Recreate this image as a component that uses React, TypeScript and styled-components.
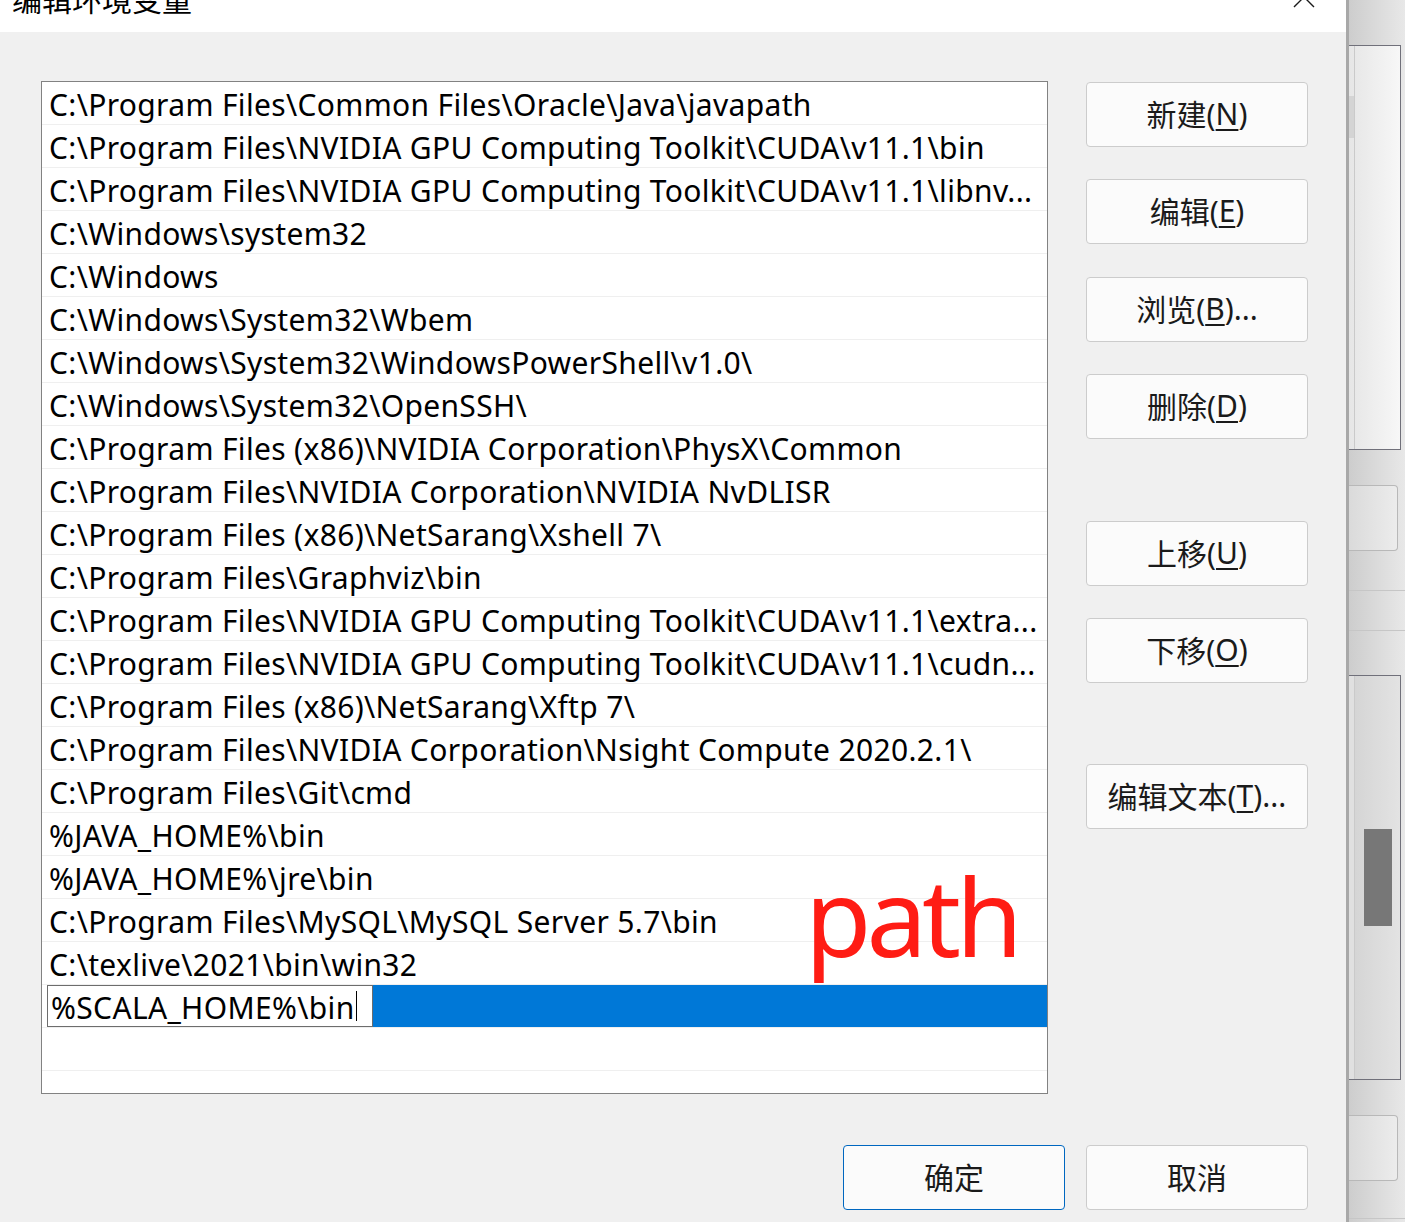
import React from "react";
import styled, { createGlobalStyle } from "styled-components";

const GlobalStyle = createGlobalStyle`
  html, body {
    margin: 0;
    padding: 0;
    background: #f0f0f0;
    overflow: hidden;
  }
`;

const Screen = styled.div`
  width: 1405px;
  height: 1222px;
  display: flex;
  overflow: hidden;
`;

const Dialog = styled.div`
  position: relative;
  width: 1346px;
  flex: none;
  display: flex;
  flex-direction: column;
  background: #f0f0f0;
`;

const TitleBar = styled.div`
  height: 32px;
  flex: none;
  background: #ffffff;
  display: flex;
  justify-content: space-between;
  align-items: flex-start;
  padding: 0 31px 0 12px;
  overflow: hidden;
`;

const Title = styled.div`
  margin-top: -22px;
  font-family: "Noto Sans CJK SC", sans-serif;
  font-size: 30px;
  line-height: 40px;
  color: #000;
`;

const CloseIcon = styled.svg`
  margin-top: -14px;
  width: 22px;
  height: 22px;
  flex: none;
`;

const Body = styled.div`
  flex: 1;
  display: flex;
  flex-direction: column;
  padding: 49px 38px 0 41px;
`;

const Main = styled.div`
  display: flex;
  gap: 38px;
`;

const ListBox = styled.div`
  width: 1007px;
  height: 1013px;
  box-sizing: border-box;
  border: 1px solid #828282;
  background: #ffffff;
  overflow: hidden;
`;

const Row = styled.div`
  height: 42px;
  border-bottom: 1px solid #efefef;
  padding-left: 7px;
  font-family: "Noto Sans", sans-serif;
  font-size: 30px;
  letter-spacing: 0.34px;
  line-height: 45px;
  color: #000;
  white-space: nowrap;
  overflow: hidden;
`;

const EditRow = styled.div`
  height: 42px;
  border-bottom: 1px solid #efefef;
  display: flex;
  padding-left: 5px;
`;

const EditBox = styled.div`
  width: 326px;
  box-sizing: border-box;
  border: 1px solid #6d6d6d;
  background: #fff;
  padding: 3px 0 0 3px;
  display: flex;
  align-items: center;
  font-family: "Noto Sans", sans-serif;
  font-size: 30px;
  letter-spacing: 0.34px;
  line-height: 38px;
  color: #000;
  white-space: nowrap;
`;

const Caret = styled.span`
  display: inline-block;
  width: 1px;
  height: 30px;
  margin: -4px 0 0 1px;
  background: #000;
`;

const SelectionFill = styled.div`
  flex: 1;
  background: #0078d7;
`;

const ButtonColumn = styled.div`
  width: 222px;
  display: flex;
  flex-direction: column;
  padding-top: 1px;
`;

const Btn = styled.button<{ $gap?: number; $primary?: boolean }>`
  width: 222px;
  height: 65px;
  flex: none;
  margin-top: ${(p) => p.$gap ?? 0}px;
  box-sizing: border-box;
  border: 1px solid ${(p) => (p.$primary ? "#0067c0" : "#cccccc")};
  border-radius: 4px;
  background: #fbfbfb;
  font-family: "Noto Sans", "Noto Sans CJK SC", sans-serif;
  font-size: 30px;
  color: #1a1a1a;
  padding: 0 0 3px;
  display: flex;
  align-items: center;
  justify-content: center;

  u {
    text-decoration-thickness: 1.5px;
    text-underline-offset: 4px;
  }
`;

const Footer = styled.div`
  display: flex;
  justify-content: flex-end;
  gap: 21px;
  margin-top: 51px;
`;

const Annotation = styled.div`
  position: absolute;
  left: 805px;
  top: 862px;
  font-family: "Noto Sans", sans-serif;
  font-size: 108px;
  line-height: 108px;
  letter-spacing: -5px;
  color: #ff1c14;
  pointer-events: none;
`;

/* the window sitting behind the dialog, visible on the right edge */
const BackWindow = styled.div`
  flex: 1;
  box-sizing: border-box;
  border-left: 3px solid #a8a8a8;
  background: linear-gradient(to right, #cdcdcd, #e8e8e8);
  display: flex;
  flex-direction: column;
`;

const BackPanel = styled.div<{ $top: number; $dark?: boolean }>`
  margin-top: ${(p) => p.$top}px;
  width: 52px;
  height: 405px;
  box-sizing: border-box;
  border: 1px solid #70707a;
  border-left: none;
  background: ${(p) =>
    p.$dark
      ? "linear-gradient(to right, #d3d3d3, #e3e3e3)"
      : "linear-gradient(to right, #e6e6e6, #f7f7f7)"};
  display: flex;
`;

const PanelEdge = styled.div<{ $dark?: boolean }>`
  width: 6px;
  box-sizing: border-box;
  border-right: 1px solid #cacaca;
  background: ${(p) => (p.$dark ? "#e0e0e0" : "transparent")};
  display: flex;
  flex-direction: column;
`;

const PanelEdgeBlock = styled.div`
  margin-top: 50px;
  height: 42px;
  background: #d4d4d4;
`;

const PanelTrack = styled.div`
  flex: 1;
  display: flex;
  justify-content: center;
`;

const Thumb = styled.div`
  margin-top: 153px;
  width: 28px;
  height: 97px;
  background: #777777;
`;

const BackButton = styled.div<{ $top: number }>`
  margin-top: ${(p) => p.$top}px;
  width: 49px;
  height: 66px;
  box-sizing: border-box;
  border: 1px solid #b8b8b8;
  border-left: none;
  border-radius: 0 4px 4px 0;
  background: linear-gradient(to right, #dadada, #ececec);
`;

const BackLine = styled.div<{ $top: number }>`
  margin-top: ${(p) => p.$top}px;
  height: 1px;
  background: #c6c6c6;
`;

const paths = [
  "C:\\Program Files\\Common Files\\Oracle\\Java\\javapath",
  "C:\\Program Files\\NVIDIA GPU Computing Toolkit\\CUDA\\v11.1\\bin",
  "C:\\Program Files\\NVIDIA GPU Computing Toolkit\\CUDA\\v11.1\\libnv...",
  "C:\\Windows\\system32",
  "C:\\Windows",
  "C:\\Windows\\System32\\Wbem",
  "C:\\Windows\\System32\\WindowsPowerShell\\v1.0\\",
  "C:\\Windows\\System32\\OpenSSH\\",
  "C:\\Program Files (x86)\\NVIDIA Corporation\\PhysX\\Common",
  "C:\\Program Files\\NVIDIA Corporation\\NVIDIA NvDLISR",
  "C:\\Program Files (x86)\\NetSarang\\Xshell 7\\",
  "C:\\Program Files\\Graphviz\\bin",
  "C:\\Program Files\\NVIDIA GPU Computing Toolkit\\CUDA\\v11.1\\extra...",
  "C:\\Program Files\\NVIDIA GPU Computing Toolkit\\CUDA\\v11.1\\cudn...",
  "C:\\Program Files (x86)\\NetSarang\\Xftp 7\\",
  "C:\\Program Files\\NVIDIA Corporation\\Nsight Compute 2020.2.1\\",
  "C:\\Program Files\\Git\\cmd",
  "%JAVA_HOME%\\bin",
  "%JAVA_HOME%\\jre\\bin",
  "C:\\Program Files\\MySQL\\MySQL Server 5.7\\bin",
  "C:\\texlive\\2021\\bin\\win32",
];

const sideButtons = [
  { label: "新建", key: "N", tail: "", gap: 0 },
  { label: "编辑", key: "E", tail: "", gap: 32 },
  { label: "浏览", key: "B", tail: "...", gap: 33 },
  { label: "删除", key: "D", tail: "", gap: 32 },
  { label: "上移", key: "U", tail: "", gap: 82 },
  { label: "下移", key: "O", tail: "", gap: 32 },
  { label: "编辑文本", key: "T", tail: "...", gap: 81 },
];

export default function App() {
  return (
    <>
      <GlobalStyle />
      <Screen>
        <Dialog>
          <TitleBar>
            <Title>编辑环境变量</Title>
            <CloseIcon viewBox="0 0 22 22" fill="none" stroke="#1a1a1a" strokeWidth="1.4">
              <path d="M1 1L21 21M21 1L1 21" />
            </CloseIcon>
          </TitleBar>
          <Body>
            <Main>
              <ListBox>
                {paths.map((p) => (
                  <Row key={p}>{p}</Row>
                ))}
                <EditRow>
                  <EditBox>
                    %SCALA_HOME%\bin
                    <Caret />
                  </EditBox>
                  <SelectionFill />
                </EditRow>
                <Row />
              </ListBox>
              <ButtonColumn>
                {sideButtons.map((b) => (
                  <Btn key={b.key} $gap={b.gap}>
                    {b.label}(<u>{b.key}</u>){b.tail}
                  </Btn>
                ))}
              </ButtonColumn>
            </Main>
            <Footer>
              <Btn $primary>确定</Btn>
              <Btn>取消</Btn>
            </Footer>
          </Body>
          <Annotation>path</Annotation>
        </Dialog>
        <BackWindow>
          <BackPanel $top={45}>
            <PanelEdge>
              <PanelEdgeBlock />
            </PanelEdge>
          </BackPanel>
          <BackButton $top={35} />
          <BackLine $top={39} />
          <BackLine $top={39} />
          <BackPanel $top={44} $dark>
            <PanelEdge $dark />
            <PanelTrack>
              <Thumb />
            </PanelTrack>
          </BackPanel>
          <BackButton $top={35} />
          <BackLine $top={37} />
        </BackWindow>
      </Screen>
    </>
  );
}
